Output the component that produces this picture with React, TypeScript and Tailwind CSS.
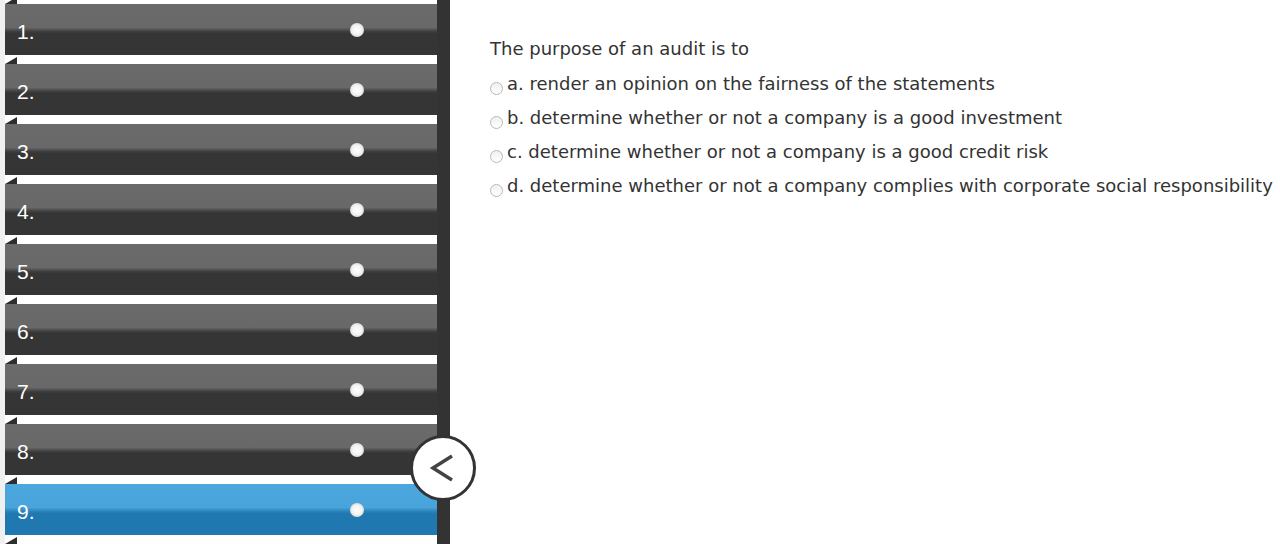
import React from 'react';

const rows = [1, 2, 3, 4, 5, 6, 7, 8, 9];

const options = [
  'a. render an opinion on the fairness of the statements',
  'b. determine whether or not a company is a good investment',
  'c. determine whether or not a company is a good credit risk',
  'd. determine whether or not a company complies with corporate social responsibility',
];

function Corner() {
  return (
    <svg width="12" height="7" viewBox="0 0 12 7" className="block">
      <polygon points="0,7 12,0 12,7" fill="#2e2e2e" />
    </svg>
  );
}

function Row({ n, active }: { n: number; active: boolean }) {
  const bg = active
    ? 'bg-[linear-gradient(#4ba7dd_0%,#48a4da_46%,#2a82ba_54%,#2078b0_58%,#2078b0_100%)]'
    : 'bg-[linear-gradient(#6b6b6b_0%,#686868_46%,#3e3e3e_54%,#353535_58%,#353535_100%)]';
  return (
    <div className="mt-[2px] first:mt-0">
      <Corner />
      <div className={`relative h-[51px] ${bg}`}>
        <span className="absolute left-[12px] top-[16px] text-[21px] leading-[24px] text-white font-['Liberation_Sans',Arial,sans-serif]">
          {n}.
        </span>
        <span className="absolute left-[345px] top-[19px] w-[14px] h-[14px] rounded-full bg-[radial-gradient(circle,#ffffff_0%,#f4f4f4_45%,#d8d8d8_75%,rgba(200,200,200,0)_100%)]" />
      </div>
    </div>
  );
}

export default function App() {
  return (
    <div className="relative flex w-[1280px] h-[544px] overflow-hidden bg-white">
      <div className="w-[437px] h-full shrink-0 border-l-[5px] border-[#f0f0f0] overflow-hidden">
        <div className="-mt-[3px]">
          {rows.map((n) => (
            <Row key={n} n={n} active={n === 9} />
          ))}
          <div className="mt-[2px]">
            <Corner />
          </div>
        </div>
      </div>
      <div className="w-[13px] h-full shrink-0 bg-[#333333]" />

      <button className="absolute left-[410px] top-[435px] w-[66px] h-[66px] rounded-full bg-white border-[3px] border-[#333333] flex items-center justify-center">
        <svg width="32" height="32" viewBox="0 0 32 32">
          <polyline points="25,4 6,16 25,28" fill="none" stroke="#444" strokeWidth="3.5" />
        </svg>
      </button>

      <div className="pl-[40px] pt-[38px] text-[#333333] text-[18px] font-['DejaVu_Sans',Verdana,sans-serif]">
        <p className="leading-[22px] mb-[14px]">The purpose of an audit is to</p>
        <div className="flex flex-col gap-[12px]">
          {options.map((o) => (
            <div key={o} className="flex items-center h-[22px] whitespace-nowrap">
              <span className="mt-[6px] w-[13px] h-[13px] rounded-full border border-[#b8b8b8] bg-[linear-gradient(#f0f0f0,#ffffff)] mr-[4px] shrink-0" />
              <span className="leading-[22px] -mt-[2px]">{o}</span>
            </div>
          ))}
        </div>
      </div>
    </div>
  );
}
